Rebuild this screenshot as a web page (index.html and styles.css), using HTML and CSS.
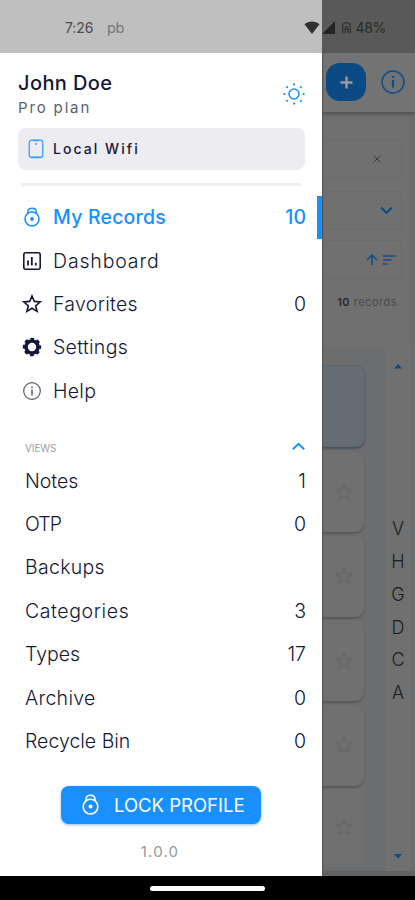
FILE: index.html
```html
<!DOCTYPE html>
<html lang="en">
<head>
<meta charset="utf-8">
<meta name="viewport" content="width=device-width">
<title>Records</title>
<link rel="stylesheet" href="styles.css">
</head>
<body>
<svg width="0" height="0" class="defs">
  <symbol id="lock" viewBox="0 0 20 20"><g fill="none" stroke="currentColor"><circle cx="10" cy="12" r="7" stroke-width="1.600"/><path d="M5.800 6.400V4.800C5.800 2.600 7.500 1.200 10 1.200s4.200 1.400 4.200 3.600v1.600" stroke-width="1.500"/></g><circle cx="10" cy="12" r="1.900" fill="currentColor"/></symbol>
  <symbol id="star" viewBox="0 0 20 20"><path d="M10 2l2.300 5.400 5.900.5-4.500 3.800 1.400 5.700-5.100-3.100-5.100 3.100 1.400-5.700-4.500-3.800 5.900-.5z" fill="none" stroke="currentColor" stroke-width="1.600" stroke-linejoin="miter"/></symbol>
</svg>
<div class="screen">
  <header class="status">
    <span class="time">7:26</span><span class="carrier">pb</span>
    <div class="status-icons">
      <svg class="wifi" viewBox="0 0 16 14"><path d="M.5 3.300C4.500-.4 11.500-.4 15.500 3.300L8 13z"/></svg>
      <svg class="signal" viewBox="0 0 13 13"><path d="M0 13L13 0v13z"/></svg>
      <svg class="battery" viewBox="0 0 10 14"><path d="M1 13V2.300h2.200V1h3.600v1.300H9V13" fill="none" stroke="#292929" stroke-width="1.100"/><path d="M5 4.500L2.800 8.500h4.400zM3.500 8.500V13M6.500 8.500V13" fill="none" stroke="#292929" stroke-width="1.100"/></svg>
      <span>48%</span>
    </div>
  </header>

  <main class="app">
    <div class="toolbar">
      <button class="add"><svg viewBox="0 0 14 14"><path d="M7 .5v13M.5 7h13" stroke="#9c9c9c" stroke-width="2.600"/></svg></button>
      <svg class="info" viewBox="0 0 24 24"><g fill="none" stroke="#094f8c"><circle cx="12" cy="12" r="11" stroke-width="1.500"/><path d="M12 10v7.500M12 6v2" stroke-width="2.200"/></g></svg>
    </div>
    <div class="filters">
      <div class="field search"><svg viewBox="0 0 8 8"><path d="M.7.7l6.600 6.600M7.300.7L.7 7.300" stroke="#393939" stroke-width="1"/></svg></div>
      <div class="field select"><svg viewBox="0 0 12 8"><path d="M1 1.200l5 5 5-5" fill="none" stroke="#074b86" stroke-width="1.900"/></svg></div>
      <div class="field sort">
        <svg class="up" viewBox="0 0 12 12"><path d="M1 6l5-5 5 5M6 1.500V11" fill="none" stroke="#184d80" stroke-width="1.600"/></svg>
        <svg class="bars" viewBox="0 0 13 10"><path d="M0 1h12.500M0 5h8.500M0 9h4.500" stroke="#184d80" stroke-width="1.600"/></svg>
      </div>
      <p class="count"><b>10</b> records</p>
    </div>
    <div class="content">
      <div class="cards">
        <div class="card active"></div>
        <div class="card"><svg><use href="#star"/></svg></div>
        <div class="card"><svg><use href="#star"/></svg></div>
        <div class="card"><svg><use href="#star"/></svg></div>
        <div class="card"><svg><use href="#star"/></svg></div>
        <div class="card"><svg><use href="#star"/></svg></div>
      </div>
      <div class="index">
        <svg viewBox="0 0 8 5"><path d="M0 4.500L4 0l4 4.500z"/></svg>
        <div class="letters"><span>V</span><span>H</span><span>G</span><span>D</span><span>C</span><span>A</span></div>
        <svg viewBox="0 0 8 5"><path d="M0 0h8L4 4.500z"/></svg>
      </div>
    </div>
  </main>

  <aside class="drawer">
    <div class="profile">
      <div><h1>John Doe</h1><p>Pro plan</p></div>
      <svg class="sun" viewBox="0 0 22 22"><circle cx="11" cy="11" r="5" fill="none" stroke="#1890ff" stroke-width="1.500"/><path d="M11 .5v1.800M11 19.700v1.800M.5 11h1.800M19.700 11h1.800M3.500 3.500l1.200 1.200M17.300 17.300l1.200 1.200M3.500 18.500l1.200-1.200M17.300 4.700l1.200-1.200" stroke="#1890ff" stroke-width="2"/></svg>
    </div>
    <div class="network">
      <svg viewBox="0 0 16 20"><rect x="1.200" y="1.200" width="13.600" height="17.300" rx="2.500" fill="none" stroke="#3d9bfa" stroke-width="1.300"/><path d="M5 1.500h6M8 4v2M3.500 18.200h9" stroke="#3d9bfa" stroke-width="1.400"/></svg>
      <span>Local Wifi</span>
    </div>
    <hr>
    <nav class="menu">
      <a class="row selected"><svg><use href="#lock"/></svg><span>My Records</span><em>10</em></a>
      <a class="row"><svg viewBox="0 0 20 20"><rect x="1.800" y="1.800" width="16.400" height="16.400" rx="2" fill="none" stroke="currentColor" stroke-width="1.600"/><path d="M6 9.500v5M9.800 6v8.500M13.800 11.800v2.700" stroke="currentColor" stroke-width="1.800"/></svg><span class="widest">Dashboard</span></a>
      <a class="row"><svg><use href="#star"/></svg><span class="wide">Favorites</span><em>0</em></a>
      <a class="row"><svg viewBox="0 0 20 20"><circle cx="10" cy="10" r="6" fill="none" stroke="currentColor" stroke-width="3.600"/><circle cx="10" cy="10" r="8" fill="none" stroke="currentColor" stroke-width="2.400" stroke-dasharray="3.600 2.683" stroke-dashoffset="1.800"/></svg><span class="wide">Settings</span></a>
      <a class="row"><svg viewBox="0 0 20 20"><g fill="none" stroke="#555b66"><circle cx="10" cy="10" r="8.300" stroke-width="1.200"/><path d="M10 8.500v6M10 5.500v1.800" stroke-width="1.500"/></g></svg><span class="wide">Help</span></a>
    </nav>
    <div class="views-head"><span>VIEWS</span><svg viewBox="0 0 12 8"><path d="M.8 6.500L6 1.500l5.200 5" fill="none" stroke="#1890ff" stroke-width="1.800"/></svg></div>
    <nav class="views">
      <a class="row"><span>Notes</span><em>1</em></a>
      <a class="row"><span class="tight">OTP</span><em>0</em></a>
      <a class="row"><span class="wide">Backups</span></a>
      <a class="row"><span class="wider">Categories</span><em>3</em></a>
      <a class="row"><span>Types</span><em>17</em></a>
      <a class="row"><span class="wide">Archive</span><em>0</em></a>
      <a class="row"><span>Recycle Bin</span><em>0</em></a>
    </nav>
    <button class="lock"><svg><use href="#lock"/></svg><span>LOCK PROFILE</span></button>
    <p class="version">1.0.0</p>
  </aside>
  <footer class="gesture"><i></i></footer>
</div>
</body>
</html>
```
FILE: styles.css
```css
* { box-sizing: border-box; }
body { margin: 0; font-family: Inter, "Open Sans", sans-serif; color: #13183a; }
h1, p { margin: 0; }
svg { display: block; flex: none; }
button { border: 0; font: inherit; }
.defs { position: absolute; }
.screen { position: relative; width: 415px; height: 900px; overflow: hidden; display: flex; flex-direction: column; background: #000; }

.status { height: 53px; flex: none; display: flex; align-items: center; padding: 2px 29px 0 65px; background: linear-gradient(90deg, #bfbfbf 322px, #595959 322px); font-size: 14px; color: #4b4b4b; }
.time { letter-spacing: -.1px; width: 42px; }
.carrier { color: #777; font-size: 14.500px; letter-spacing: -.5px; }
.status-icons { margin-left: auto; display: flex; align-items: center; color: #292929; fill: #303030; letter-spacing: -.3px; }
.wifi { width: 16px; height: 14px; margin-right: 2px; }
.signal { width: 13px; height: 13px; margin-right: 7px; fill: #242424; }
.battery { width: 9px; height: 14px; margin-right: 4px; }

.app { height: 823px; flex: none; padding-left: 322px; display: flex; flex-direction: column; background: #6c6d6f; }
.toolbar { height: 59px; flex: none; display: flex; align-items: center; gap: 15px; padding: 0 0 1px 4px; background: #737373; box-shadow: 0 2px 4px #4d4d4d; z-index: 1; }
.add { width: 40px; height: 38px; padding: 0; border-radius: 14px; display: grid; place-items: center; background: #0b4a82; }
.add svg { width: 13px; height: 13px; }
.info { width: 24px; height: 24px; }
.filters { height: 236px; flex: none; padding: 27px 13px 0 0; background: #707070; border-right: 5px solid #6c6c6c; display: flex; flex-direction: column; }
.field { height: 39px; display: flex; align-items: center; justify-content: flex-end; border: 1px solid #6b6b6b; border-left: 0; border-radius: 0 4px 4px 0; margin-right: -5px; }
.search { padding-right: 20px; }
.search svg { width: 8px; height: 8px; }
.select { margin-top: 13px; padding-right: 8px; }
.select svg { width: 13px; height: 9px; }
.sort { margin-top: 10px; gap: 5px; padding-right: 5px; }
.up { width: 12px; height: 12px; }
.bars { width: 13px; height: 10px; }
.count { margin-top: 15px; text-align: right; font-size: 11px; line-height: 16px; letter-spacing: .5px; color: #4b4b4b; white-space: nowrap; }
.count b { color: #292929; font-weight: 600; }
.content { flex: 1; display: flex; justify-content: space-between; padding-right: 5px; border-bottom: 5px solid #616263; overflow: hidden; }
.cards { width: 44px; padding-top: 17px; }
.card { width: 42px; height: 81px; margin-bottom: 3.500px; display: flex; align-items: center; justify-content: flex-end; padding-right: 10px; border-radius: 0 9px 9px 0; background: #707070; box-shadow: 0 2px 2px #58595b; color: #686868; }
.card svg { width: 20px; height: 20px; }
.card.active { width: 43px; height: 82px; background: #666d72; border: 1px solid #5c676f; border-left: 0; margin-bottom: 4px; box-shadow: 0 2px 2px #4b535d; }
.card:last-child { height: 75px; box-shadow: none; }
.index { width: 24px; display: flex; flex-direction: column; align-items: center; background: #707070; fill: #084b87; padding: 16px 0 12px; }
.index svg { width: 8px; height: 5px; }
.letters { flex: 1; display: flex; flex-direction: column; justify-content: center; font-size: 18px; font-weight: 300; line-height: 32.700px; color: #1c1c1c; text-align: center; }

.drawer { position: absolute; left: 0; top: 53px; width: 322px; height: 823px; background: #fff; display: flex; flex-direction: column; box-shadow: 1px 0 1px #555; clip-path: inset(0 -4px 0 0); z-index: 2; }
.profile { height: 75px; flex: none; display: flex; justify-content: space-between; padding: 16px 17px 0 18px; }
h1 { font-size: 20px; font-weight: 500; line-height: 28px; letter-spacing: .4px; }
.profile p { font-size: 15px; line-height: 22px; font-weight: 400; letter-spacing: 1.850px; color: #5a5f72; }
.sun { width: 22px; height: 22px; margin-top: 14px; }
.network { height: 42px; flex: none; margin: 0 17px 0 18px; padding: 0 10px; display: flex; align-items: center; gap: 9px; background: #edecf1; border-radius: 8px; font-size: 14px; font-weight: 500; letter-spacing: 2.050px; }
.network span { margin-top: -1px; }
.network svg { width: 16px; height: 20px; }
hr { width: 280px; height: 3px; border: 0; margin: 13px 0 9.500px 21px; background: #efefef; flex: none; }
.row { height: 43.400px; display: flex; align-items: center; padding: 0 16px 0 25px; font-size: 19.500px; font-weight: 300; letter-spacing: 0; white-space: nowrap; }
.row em { margin-left: auto; font-style: normal; letter-spacing: 0; }
.row .tight { letter-spacing: -.9px; }
.row .wide { letter-spacing: .3px; }
.row .wider { letter-spacing: .6px; }
.row .widest { letter-spacing: .85px; }
.menu .row { padding-left: 22px; }
.menu svg { width: 20px; height: 20px; margin-right: 11px; }
.menu .selected { color: #1890ff; font-weight: 500; letter-spacing: .2px; border-right: 5px solid #1890ff; padding-right: 11px; }
.views-head { height: 46.500px; flex: none; display: flex; justify-content: space-between; align-items: center; padding: 24px 17px 0 25px; font-size: 10px; letter-spacing: -.1px; color: #9a9ca2; }
.views-head svg { width: 13px; height: 9px; margin-top: -3px; }
.lock { width: 200px; height: 38px; flex: none; margin: 23px 0 0 61px; padding: 0 17px 0 19px; display: flex; align-items: center; gap: 13px; color: #fff; background: #1890ff; border-radius: 8px; box-shadow: 0 1px 3px #8bbdec; font-size: 18.500px; font-weight: 400; white-space: nowrap; }
.lock svg { width: 21px; height: 21px; }
.version { margin-top: 18px; padding-right: 2px; text-align: center; font-size: 15px; line-height: 20px; letter-spacing: 1.200px; color: #96989e; }
.gesture { height: 24px; display: grid; place-items: center; }
.gesture i { width: 115px; height: 5px; border-radius: 3px; background: #fff; }
```
